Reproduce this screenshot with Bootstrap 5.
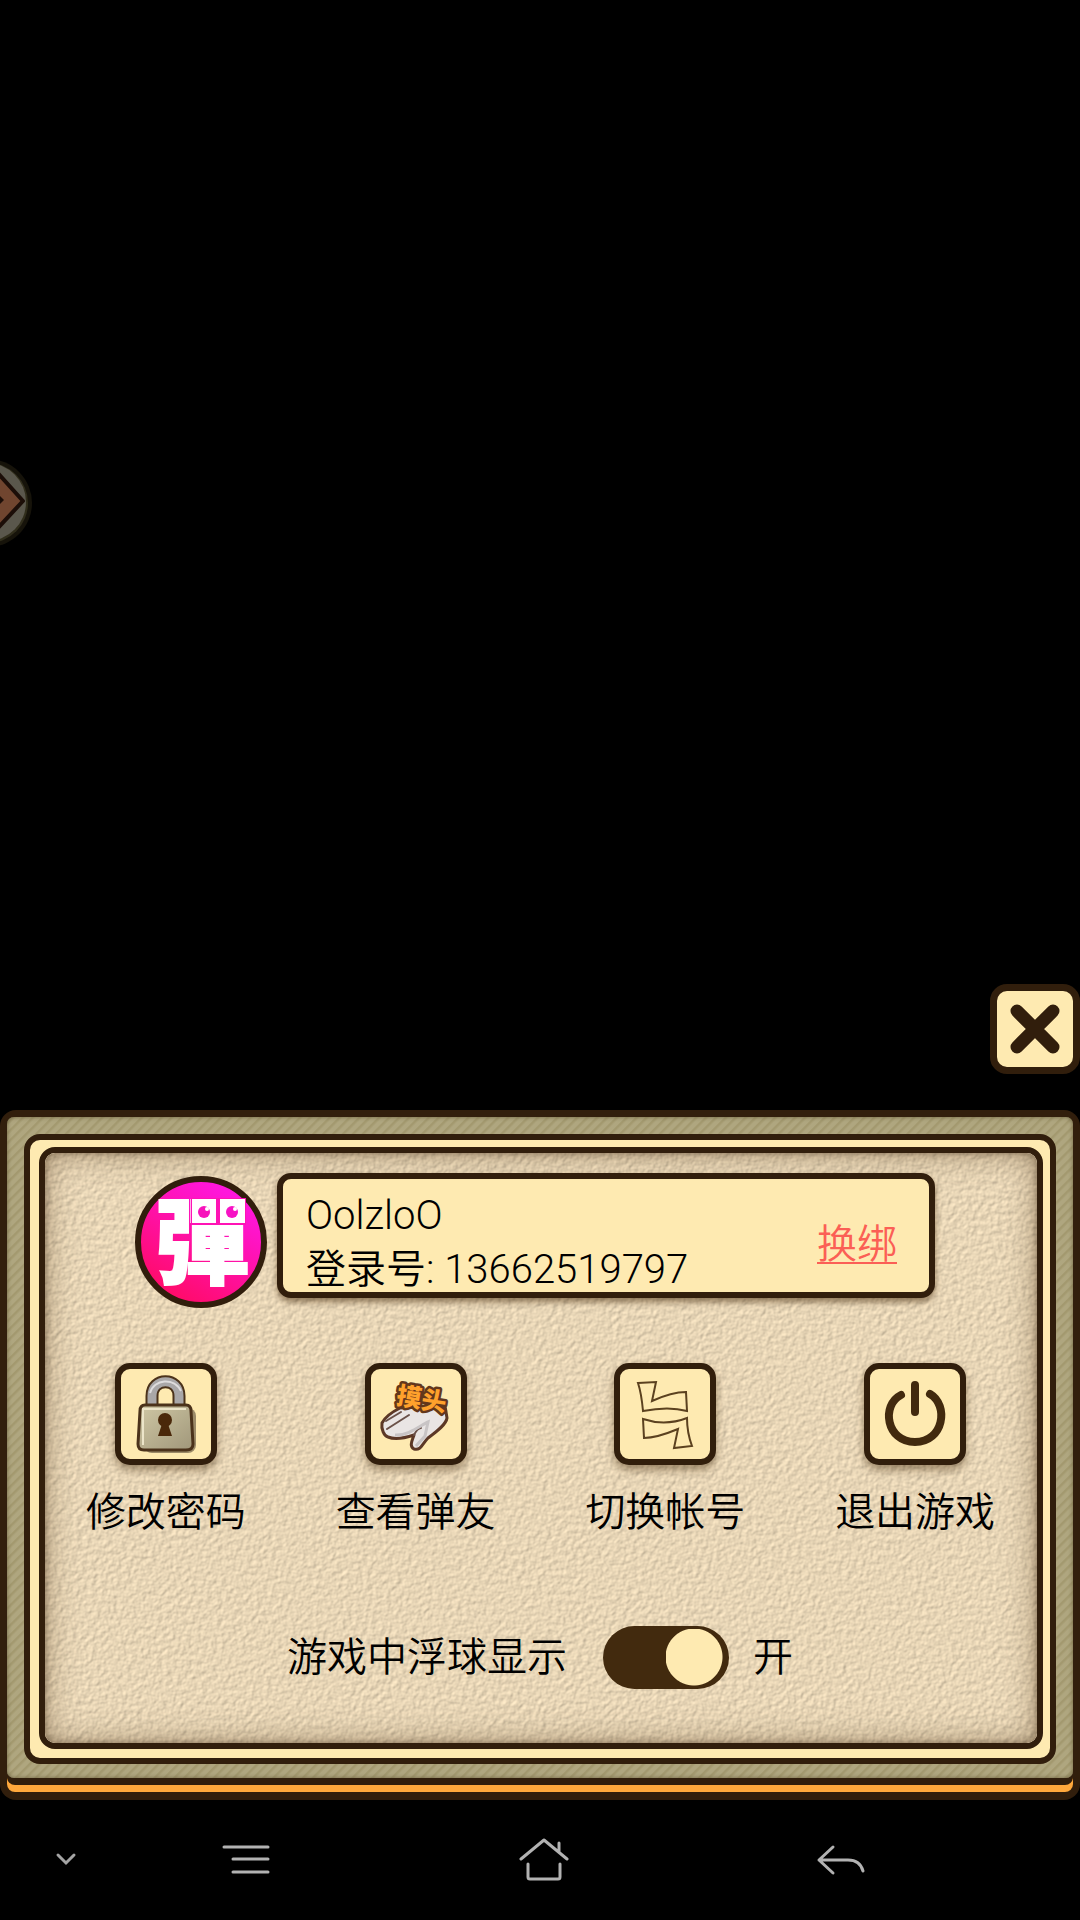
<!DOCTYPE html>
<html lang="zh-CN">
<head>
<meta charset="utf-8">
<meta name="viewport" content="width=device-width, initial-scale=1">
<title>弹友中心</title>
<link href="https://cdn.jsdelivr.net/npm/bootstrap@5.3.0/dist/css/bootstrap.min.css" rel="stylesheet">
<style>
:root { --ink: #311e0c; --cream: #feeab1; }
body { background: #000; color: #000; font-family: Roboto, "Noto Sans CJK SC", sans-serif; font-weight: 350; font-size: 40px; line-height: 40px; }
.float-ball { position: absolute; left: 0; top: 455px; width: 36px; height: 96px; }
.float-ball svg { display: block; }
.close-btn { width: 90px; height: 90px; border: 7px solid var(--ink); border-radius: 17px; background: var(--cream); margin-bottom: 36px; }
.base-frame { background: var(--ink); border-radius: 16px; padding: 7px 7px 8px; }
.orange-lip { background: #ffa83c; border-radius: 8px; padding-bottom: 7px; }
.lip-line { background: var(--ink); border-radius: 0 0 8px 8px; padding-bottom: 7px; }
.olive-frame { border-radius: 7px; padding: 17px 17px 14px; background: repeating-linear-gradient(135deg, #afa67f 0 3px, #a3996f 4px 5px, #afa67f 7px); box-shadow: inset 0 0 4px #6d6340; }
.cream-frame { background: var(--cream); border: 6px solid var(--ink); border-radius: 16px; padding: 7px 7px 9px 9px; }
.parchment { position: relative; border: 6px solid var(--ink); border-radius: 16px; background: #e8d7b8; overflow: hidden; padding: 20px 0 54px; }
.grain { position: absolute; inset: 0; width: 100%; height: 100%; }
.edge-shade { position: absolute; inset: 0; border-radius: 10px; box-shadow: inset 0 0 32px rgba(90, 65, 35, .5), inset 0 0 6px rgba(60, 40, 20, .5); pointer-events: none; }
.profile { padding: 0 102px 0 90px; gap: 10px; }
.avatar { width: 132px; height: 132px; margin-top: 3px; flex: none; overflow: visible; }
.info-box { height: 125px; border: 6px solid var(--ink); border-radius: 14px; background: var(--cream); padding: 10px 32px 0 23px; box-shadow: 0 4px 6px rgba(80, 55, 25, .6); }
.info-line { line-height: 54px; white-space: nowrap; }
.rebind { color: #fb5f55; text-underline-offset: 4px; text-decoration-thickness: 2px; padding-top: 8px; }
.actions { --bs-gutter-x: 8px; margin-top: 55px; padding-right: 1px; }
.action-btn { border: 0; background: none; padding: 0; color: inherit; font-weight: inherit; gap: 28px; }
.tile { display: block; width: 102px; height: 102px; border: 6px solid var(--ink); border-radius: 15px; background: var(--cream); box-shadow: 0 5px 8px rgba(80, 55, 25, .5); }
.tile svg { display: block; }
.switch-row { margin-top: 93px; height: 63px; padding-right: 2px; }
.ball-switch { appearance: none; width: 126px; height: 63px; margin: 0 24px 0 36px; border-radius: 32px; background: #422a0e radial-gradient(circle at 28px 28px, var(--cream) 28px, transparent 29px) 8px 3px / 57px 57px no-repeat; }
.ball-switch:checked { background-position-x: 63px; }
.sys-nav { display: grid; grid-template-columns: 132fr 230fr 364fr 230fr 124fr; height: 120px; }
.sys-nav button { border: 0; background: none; padding: 0; }
</style>
</head>
<body>
<div class="min-vh-100 d-flex flex-column">
  <button class="float-ball border-0 p-0 bg-transparent" type="button" aria-label="浮球">
    <svg width="36" height="96" viewBox="0 455 36 96">
      <circle cx="-12" cy="503" r="44" fill="#16130a"/>
      <circle cx="-12" cy="503" r="40" fill="#302d1b"/>
      <circle cx="-13" cy="502" r="39" fill="#5a574c"/>
      <path d="M-4 471 L23 501 L-4 530Z" fill="#70452f" stroke="#1c0e08" stroke-width="4" stroke-linejoin="round"/>
      <path d="M-4 492 L4 500 L-4 508Z" fill="#1c0e08"/>
    </svg>
  </button>
  <main class="mt-auto">
    <div class="d-flex justify-content-end">
      <button class="close-btn p-0" type="button" aria-label="关闭">
        <svg class="d-block" width="76" height="76" viewBox="0 0 76 76"><path d="M20 20L56 56M56 20L20 56" stroke="#311e0c" stroke-width="13" stroke-linecap="round"/></svg>
      </button>
    </div>
    <section class="base-frame">
      <div class="orange-lip"><div class="lip-line"><div class="olive-frame"><div class="cream-frame">
        <div class="parchment">
          <svg class="grain" aria-hidden="true">
            <filter id="paper" x="0" y="0" width="100%" height="100%" color-interpolation-filters="sRGB">
              <feTurbulence type="fractalNoise" baseFrequency="0.2" numOctaves="2" seed="8"/>
              <feDiffuseLighting surfaceScale="0.6" diffuseConstant="1.1" lighting-color="#f3e0bf"><feDistantLight azimuth="225" elevation="60"/></feDiffuseLighting>
            </filter>
            <rect width="100%" height="100%" filter="url(#paper)"/>
          </svg>
          <div class="edge-shade"></div>
          <div class="position-relative">
            <div class="profile d-flex align-items-start">
              <svg class="avatar" viewBox="0 0 132 132" role="img" aria-label="弹">
                <defs><linearGradient id="pink" x1=".2" y1=".9" x2=".7" y2=".1"><stop offset="0" stop-color="#ff0b68"/><stop offset="1" stop-color="#ff16dc"/></linearGradient></defs>
                <circle cx="66" cy="66" r="63" fill="url(#pink)" stroke="#311e0c" stroke-width="6"/>
                <text x="20" y="101" font-family="Noto Sans CJK TC" font-weight="900" font-size="94" fill="#fff" stroke="#fff" stroke-width="2">彈</text>
                <path d="M56 22H111V49H56Z" fill="#ff13b5"/>
                <path d="M57 23H81V47H57ZM85 23H110V47H85Z" fill="#fff"/>
                <circle cx="69" cy="36" r="6" fill="#f712bb"/><circle cx="97" cy="36" r="6" fill="#f712c5"/>
                <circle cx="72" cy="33" r="2" fill="#fff"/><circle cx="100" cy="33" r="2" fill="#fff"/>
              </svg>
              <div class="info-box flex-grow-1 d-flex justify-content-between">
                <div>
                  <div class="info-line">OolzloO</div>
                  <div class="info-line">登录号: 13662519797</div>
                </div>
                <a class="rebind align-self-center" href="#">换绑</a>
              </div>
            </div>
            <div class="actions row">
              <div class="col d-flex justify-content-center">
                <button class="action-btn d-flex flex-column align-items-center" type="button">
                  <span class="tile"><svg width="90" height="90" viewBox="0 0 90 90">
                    <defs><linearGradient id="brass" x2="1" y2="1"><stop offset="0" stop-color="#d0c8a5"/><stop offset="1" stop-color="#a0977a"/></linearGradient></defs>
                    <rect x="23" y="39" width="52" height="45" rx="8" fill="#9b8a68"/>
                    <path d="M31 36V27C31 8 58 8 58 27V36" fill="none" stroke="#4b321a" stroke-width="13"/>
                    <path d="M31 36V27C31 8 58 8 58 27V36" fill="none" stroke="#a9a7a8" stroke-width="9"/>
                    <path d="M29 24C33 10 53 8 60 22" fill="none" stroke="#dedcdd" stroke-width="2"/>
                    <path d="M24 36H65Q70 36 70 42L72 75Q72 81 65 81H23Q17 81 17 75L19 42Q19 36 24 36Z" fill="url(#brass)" stroke="#4b321a" stroke-width="3"/>
                    <path d="M22 76V40H65" fill="none" stroke="#ece5c9" stroke-width="2"/>
                    <circle cx="44" cy="51" r="7" fill="#4a280a"/><path d="M41 55L37 67H51L47 55Z" fill="#4a280a"/>
                  </svg></span>
                  <span>修改密码</span>
                </button>
              </div>
              <div class="col d-flex justify-content-center">
                <button class="action-btn d-flex flex-column align-items-center" type="button">
                  <span class="tile"><svg width="90" height="90" viewBox="0 0 90 90">
                    <path d="M29 39C23 42 14 48 11 54C10 60 13 67 17 68C24 71 34 69 43 66C41 72 38 77 43 80C50 82 51 75 57 69C65 63 75 56 76 49L74 37Z" fill="#e9e5e4" stroke="#5c3826" stroke-width="3" stroke-linejoin="round"/>
                    <path d="M15 52L30 43M16 60L38 46M43 66C45 62 48 59 50 59" fill="none" stroke="#6a5149" stroke-width="2" stroke-linecap="round"/>
                    <path d="M24 66C37 67 50 56 57 53L54 67L45 77" fill="none" stroke="#c8c4c5" stroke-width="3"/>
                    <text transform="rotate(9 50 28)" x="26" y="39" font-family="Noto Sans CJK SC" font-weight="900" font-size="25" fill="#ffa12c" stroke="#63371b" stroke-width="5" stroke-linejoin="round" paint-order="stroke">摸头</text>
                  </svg></span>
                  <span>查看弹友</span>
                </button>
              </div>
              <div class="col d-flex justify-content-center">
                <button class="action-btn d-flex flex-column align-items-center" type="button">
                  <span class="tile"><svg width="90" height="90" viewBox="0 0 90 90">
                    <path d="M18 14L36 13L32 32C43 27 54 23 66 23L67 42C53 38 38 39 23 42C22 31 21 23 18 14ZM23 50C38 55 54 54 67 49C67 60 69 69 72 77L54 79L58 60C46 65 34 69 24 69Z" fill="none" stroke="#5b411f" stroke-width="2"/>
                  </svg></span>
                  <span>切换帐号</span>
                </button>
              </div>
              <div class="col d-flex justify-content-center">
                <button class="action-btn d-flex flex-column align-items-center" type="button">
                  <span class="tile"><svg width="90" height="90" viewBox="0 0 90 90">
                    <path d="M45 16V43M31 26C11 36 16 73 45 73S79 36 60 25" fill="none" stroke="#422a0e" stroke-width="8" stroke-linecap="round"/>
                  </svg></span>
                  <span>退出游戏</span>
                </button>
              </div>
            </div>
            <div class="switch-row d-flex justify-content-center align-items-center">
              <label for="ball">游戏中浮球显示</label>
              <input class="ball-switch" type="checkbox" role="switch" id="ball" checked>
              <span>开</span>
            </div>
          </div>
        </div>
      </div></div></div></div>
    </section>
  </main>
  <nav class="sys-nav align-items-center" aria-label="系统导航">
    <button type="button" aria-label="收起"><svg class="d-block mx-auto" width="24" height="24" fill="none" stroke="#a4a4a4" stroke-width="3" stroke-linecap="round"><path d="M4 7L12 15L20 7"/></svg></button>
    <button type="button" aria-label="菜单"><svg class="d-block mx-auto" width="50" height="48" fill="none" stroke="#b2b2b2" stroke-width="3" stroke-linecap="round"><path d="M2 11H46M11 23H46M11 36H46"/></svg></button>
    <button type="button" aria-label="主页"><svg class="d-block mx-auto" width="50" height="48" fill="none" stroke="#b2b2b2" stroke-width="3" stroke-linecap="round" stroke-linejoin="round"><path d="M2 23L25 4L48 23M40 16V7M9 28V41Q9 43 11 43H39Q41 43 41 41V28"/></svg></button>
    <button type="button" aria-label="返回"><svg class="d-block mx-auto" width="50" height="48" fill="none" stroke="#b2b2b2" stroke-width="3" stroke-linecap="round" stroke-linejoin="round"><path d="M17 11L3 24L17 37M3 24H32Q44 24 47 35"/></svg></button>
  </nav>
</div>
<script src="https://cdn.jsdelivr.net/npm/bootstrap@5.3.0/dist/js/bootstrap.bundle.min.js"></script>
</body>
</html>
